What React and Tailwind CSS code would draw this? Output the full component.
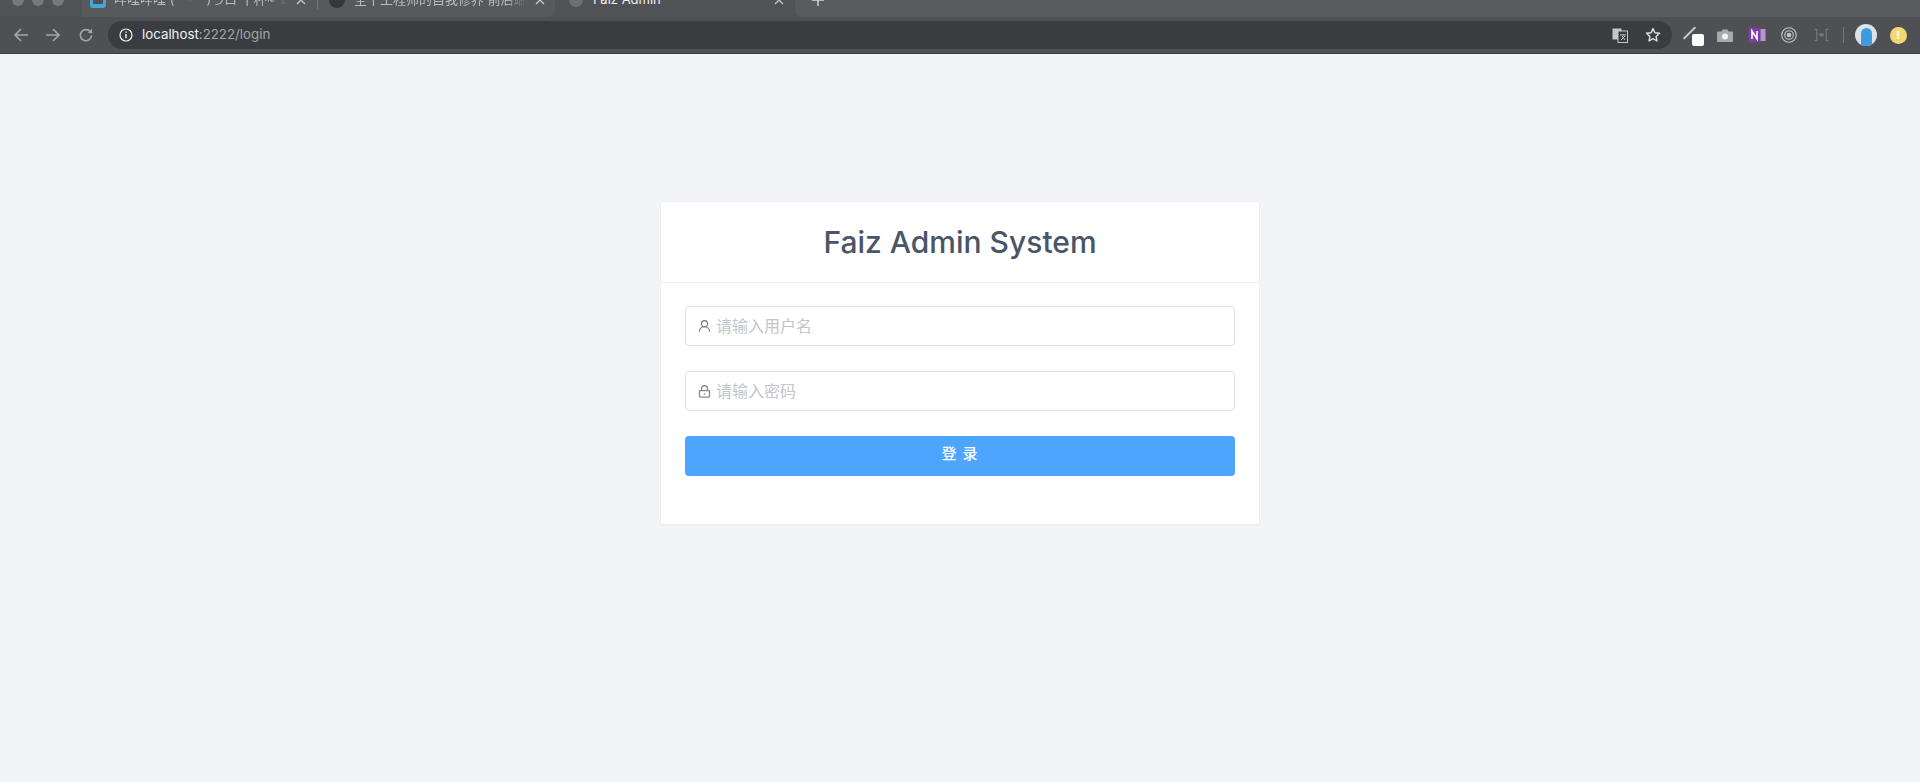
import React from "react";

const Close = () => (
  <svg width="10" height="10" viewBox="0 0 10 10" className="shrink-0" fill="none" stroke="#c9cacc" strokeWidth="1.300">
    <path d="M1 1l8 8M9 1l-8 8" />
  </svg>
);

function Tab({ cls, icon, title, text = "text-[#b9babc] [mask-image:linear-gradient(to_right,black_88%,transparent)]" }) {
  return (
    <div className={`flex items-center h-[34px] shrink-0 ${cls}`}>
      {icon}
      <span className={`flex-1 overflow-hidden whitespace-nowrap text-[13px] ${text}`}>{title}</span>
      <Close />
    </div>
  );
}

function NavArrow({ flip }) {
  return (
    <svg width="18" height="18" viewBox="0 0 18 18" fill="none" stroke="#a3a4a6" strokeWidth="1.700" className={flip ? "rotate-180" : ""}>
      <path d="M16 9H3M9 3L3 9l6 6" />
    </svg>
  );
}

export default function App() {
  return (
    <div className="min-h-[782px] flex flex-col bg-[#f3f4f6] font-['Inter','Noto_Sans_CJK_SC',sans-serif]">
      {/* Tab strip */}
      <div className="h-[17px] overflow-hidden bg-[#515256] flex items-start shrink-0">
        <div className="flex items-center -mt-[17px] w-full">
          <div className="flex items-center gap-[8px] pl-[12px] w-[82px] shrink-0">
            <span className="w-[12px] h-[12px] rounded-full bg-[#77787b]" />
            <span className="w-[12px] h-[12px] rounded-full bg-[#77787b]" />
            <span className="w-[12px] h-[12px] rounded-full bg-[#77787b]" />
          </div>
          <div className="flex items-center bg-[#58595d] rounded-br-lg">
            <Tab
              cls="w-[235px] pl-[8px] pr-[11px] gap-[8px]"
              icon={<span className="w-[16px] h-[16px] rounded-[3px] bg-[#45a5d6] shrink-0 flex items-center justify-center"><span className="w-[10px] h-[8px] bg-[#4f5054] rounded-[1px]" /></span>}
              title="哔哩哔哩 (゜-゜)つロ 干杯~-bilibili"
            />
            <div className="w-px h-[18px] bg-[#77787b] shrink-0" />
            <Tab
              cls="w-[237px] pl-[11px] pr-[10px] gap-[9px]"
              icon={<span className="w-[16px] h-[16px] rounded-full bg-[#35363a] shrink-0" />}
              title="全干工程师的自我修养 前后端"
            />
          </div>
          <Tab
            cls="w-[240px] bg-[#515256] pl-[14px] pr-[11px] gap-[10px]"
            icon={<span className="w-[14px] h-[14px] rounded-full bg-[#6e6f72] shrink-0" />}
            title="Faiz Admin"
            text="text-[#f0f0f0]"
          />
          <div className="flex items-center pl-[16px] flex-1 h-[34px] bg-[#5a5b5f] rounded-bl-lg text-[#d5d5d6]">
            <svg width="14" height="14" viewBox="0 0 14 14" stroke="currentColor" strokeWidth="1.500"><path d="M7 1v12M1 7h12" /></svg>
          </div>
        </div>
      </div>

      {/* Toolbar */}
      <div className="h-[37px] bg-[#4f5054] border-b border-[#3a3b3e] flex items-center shrink-0">
        <div className="flex items-center gap-[14px] pl-[12px] w-[108px] shrink-0">
          <NavArrow />
          <NavArrow flip />
          <svg width="18" height="18" viewBox="0 0 18 18" fill="none" stroke="#a3a4a6" strokeWidth="1.700" className="ml-[1px]">
            <path d="M14.500 9.500a5.600 5.600 0 1 1-1.600-4.300L15 7" />
            <path d="M15 2.600V7h-4.400" fill="#a3a4a6" stroke="none" />
          </svg>
        </div>
        <div className="w-[1564px] h-[28px] rounded-full bg-[#3a3d40] flex items-center pl-[11px] pr-[11px] shrink-0">
          <svg width="14" height="14" viewBox="0 0 14 14" fill="none" stroke="#f0f0f0" strokeWidth="1.200" className="shrink-0">
            <circle cx="7" cy="7" r="6" />
            <path d="M7 6v4.200M7 3.600v1.200" strokeWidth="1.500" />
          </svg>
          <span className="ml-[9px] text-[13.300px] leading-none text-[#f1f1f1]">localhost<span className="text-[#a4a6a8]">:2222/login</span></span>
          <div className="ml-auto flex items-center gap-[17px]">
            <svg width="16" height="15" viewBox="0 0 16 15" className="shrink-0">
              <rect x="0.500" y="0.500" width="9" height="11" fill="#c5c6c7" />
              <rect x="6" y="3" width="9.500" height="11.500" fill="#3a3d40" stroke="#c5c6c7" />
              <path d="M8 7h6M11 6v1M9 12l4-4M10 8l3 4" stroke="#c5c6c7" fill="none" />
            </svg>
            <svg width="16" height="16" viewBox="0 0 16 16" fill="none" stroke="#dedede" strokeWidth="1.400" strokeLinejoin="round">
              <path d="M8 1.600l1.900 4.200 4.600.5-3.400 3.100.9 4.600L8 11.700 4 14l.9-4.600L1.500 6.300l4.600-.5z" />
            </svg>
          </div>
        </div>
        <div className="flex items-center flex-1 pl-[5px]">
          <div className="w-[32px] flex justify-center shrink-0">
            <div className="relative w-[22px] h-[22px]">
              <span className="block w-[17px] h-[2px] bg-[#c8c8c9] -rotate-45 mt-[8px] -ml-[1px] rounded-full" />
              <span className="absolute right-0 bottom-0 w-[12px] h-[12px] bg-white rounded-[2px]" />
            </div>
          </div>
          <div className="w-[32px] flex justify-center shrink-0">
            <svg width="16" height="13" viewBox="0 0 16 13">
              <path d="M1 2.500h3.500l1-2h5l1 2H15a1 1 0 0 1 1 1V12a1 1 0 0 1-1 1H1a1 1 0 0 1-1-1V3.500a1 1 0 0 1 1-1z" fill="#a9aaab" />
              <circle cx="8" cy="7.500" r="3" fill="#f0f0f0" />
            </svg>
          </div>
          <div className="w-[32px] flex justify-center shrink-0">
            <svg width="18" height="18" viewBox="0 0 18 18">
              <rect x="0.500" y="1.500" width="12" height="15" rx="1" fill="#7a3fa6" />
              <rect x="12.500" y="3" width="5" height="12" fill="#b795d0" />
              <path d="M4 13V5l5 8V5" stroke="#fff" strokeWidth="1.600" fill="none" />
            </svg>
          </div>
          <div className="w-[32px] flex justify-center shrink-0">
            <svg width="16" height="16" viewBox="0 0 16 16" fill="none" stroke="#c4c5c6" strokeWidth="1.100">
              <circle cx="8" cy="8" r="7.300" />
              <circle cx="8" cy="8" r="4.300" />
              <circle cx="8" cy="8" r="1.800" fill="#c4c5c6" />
            </svg>
          </div>
          <div className="w-[32px] flex justify-center shrink-0">
            <svg width="15" height="14" viewBox="0 0 16 14" fill="none" stroke="#77787a" strokeWidth="1.200">
              <path d="M.5 1H3v12H.5M15.500 1H13v12h2.500" />
              <path d="M8 9.500 5.500 7V5.500h5V7z" fill="#77787a" stroke="none" />
            </svg>
          </div>
          <div className="w-[13px] flex justify-center shrink-0">
            <span className="w-px h-[16px] bg-[#77787a]" />
          </div>
          <div className="w-[32px] flex justify-center shrink-0">
            <span className="relative w-[22px] h-[22px] rounded-full bg-[#dce3e8] overflow-hidden flex justify-center items-end">
              <span className="w-[11px] h-[18px] rounded-t-full rounded-b-sm bg-[#3d9be0]" />
            </span>
          </div>
          <div className="w-[32px] flex justify-center shrink-0">
            <span className="w-[17px] h-[17px] rounded-full bg-[#f4d774] flex items-center justify-center text-[11px] font-bold text-white leading-none">!</span>
          </div>
        </div>
      </div>

      {/* Page */}
      <div className="flex-1 flex justify-center pt-[147px]">
        <div className="w-[600px] h-[324px] bg-white border border-[#ebeef5] rounded-[2px] shrink-0">
          <div className="h-[81px] border-b border-[#ebeef5] flex items-center justify-center">
            <h1 className="text-[30px] leading-none font-[540] text-[#4a5568]">Faiz Admin System</h1>
          </div>
          <div className="px-[24px] pt-[23px] flex flex-col gap-[25px]">
            <label className="h-[40px] border border-[#dfe1e6] rounded-[4px] flex items-center pl-[12px] pr-[15px] gap-[5px]">
              <svg width="13" height="14" viewBox="0 0 14 14" fill="none" stroke="#6f7278" strokeWidth="1.100" className="shrink-0">
                <circle cx="7" cy="4.500" r="3.300" />
                <path d="M1.500 13.200c0-3 2.200-5.400 5.500-5.400s5.500 2.400 5.500 5.400" />
              </svg>
              <input className="flex-1 min-w-0 outline-none text-[16px] placeholder:text-[#c3c5c9]" placeholder="请输入用户名" />
            </label>
            <label className="h-[40px] border border-[#dfe1e6] rounded-[4px] flex items-center pl-[12px] pr-[15px] gap-[5px]">
              <svg width="13" height="13" viewBox="0 0 14 14" fill="none" stroke="#85888d" strokeWidth="1.400" className="shrink-0">
                <rect x="1.600" y="6" width="10.800" height="7" rx="0.800" />
                <path d="M3.800 6V3.800a3.200 3.200 0 0 1 6.400 0V6" />
                <path d="M7 9v1.500" strokeWidth="1.500" />
              </svg>
              <input className="flex-1 min-w-0 outline-none text-[16px] placeholder:text-[#c3c5c9]" placeholder="请输入密码" />
            </label>
            <button className="h-[40px] bg-[#4ea5fe] rounded-[4px] text-white text-[15px] font-medium tracking-[1px] flex items-center justify-center pb-[3px]">
              登 录
            </button>
          </div>
        </div>
      </div>
    </div>
  );
}
